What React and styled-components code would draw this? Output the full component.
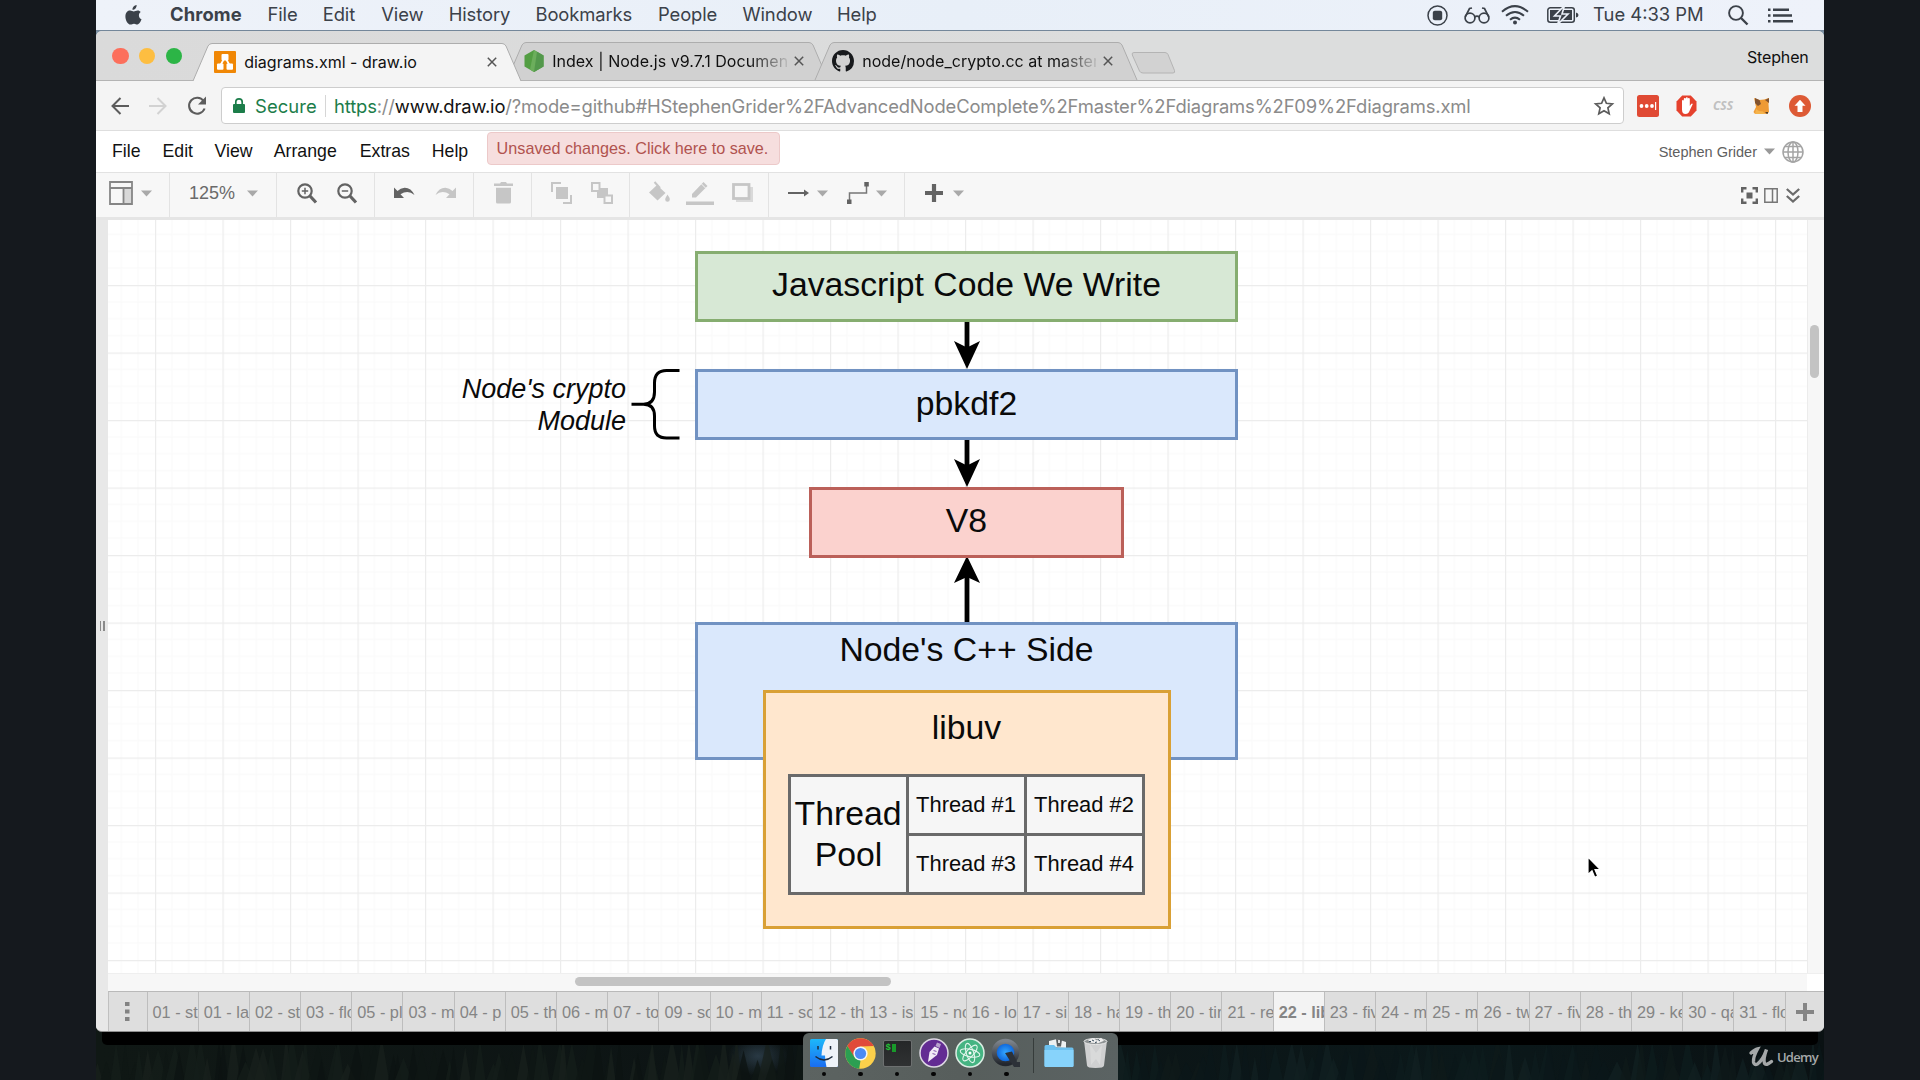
import React from "react";
import styled, { createGlobalStyle, css } from "styled-components";

const SANS = `"Liberation Sans", Arial, Helvetica, sans-serif`;
const SYSTEM = `Inter, Roboto, "Liberation Sans", sans-serif`;

const GlobalStyle = createGlobalStyle`
  * { box-sizing: border-box; }
  body { margin: 0; background: #15191e; overflow: hidden; }
`;

/* ---------- desktop ---------- */

const Screen = styled.div`
  width: 1920px;
  height: 1080px;
  padding: 0 96px;
  background: #15191e;
  font-family: ${SANS};
`;

const Desktop = styled.div`
  position: relative;
  display: flex;
  flex-direction: column;
  width: 1728px;
  height: 1080px;
  overflow: hidden;
  background: linear-gradient(#8aa0b2 0, #6d8294 60px, #0a0f10 900px);
`;

const Wallpaper = styled.svg`
  position: absolute;
  left: 0;
  bottom: 0;
  width: 1728px;
  height: 60px;
`;

const Row = styled.div`
  display: flex;
  align-items: center;
`;

const Slot = styled.div`
  display: flex;
  align-items: center;
  flex: none;
  margin-left: ${(p) => p.$gap || 0}px;
  ${(p) => p.$w && css`width: ${p.$w}px;`}
  ${(p) => p.$drop && css`padding-top: ${p.$drop}px;`}
`;

const Glyph = styled.svg`
  display: block;
  flex: none;
  overflow: visible;
`;

/* ---------- mac menu bar ---------- */

const MacBar = styled(Row)`
  position: relative;
  flex: none;
  height: 31px;
  padding: 0 31px 0 29px;
  background: linear-gradient(90deg, #eef2f9, #e8eff8 50%, #eef2fa);
  border-bottom: 1px solid #74879a;
  color: #3b4149;
  font: 18.4px/29px ${SYSTEM};
`;

const MacItem = styled.span`
  flex: none;
  width: ${(p) => p.$w}px;
  margin-left: ${(p) => p.$gap || 0}px;
  padding-bottom: 1px;
  white-space: nowrap;
  font-weight: ${(p) => (p.$bold ? 700 : 400)};
  letter-spacing: ${(p) => p.$track || 0}px;
`;

const Push = styled.div`
  flex: 1;
`;

/* ---------- browser window ---------- */

const Window = styled.div`
  position: relative;
  display: flex;
  flex-direction: column;
  flex: none;
  height: 1001px;
  border-radius: 6px;
  overflow: hidden;
  background: #e8e8e8;
  border-bottom: 1px solid #8e8e8e;
`;

const WindowShadow = styled.div`
  position: relative;
  flex: none;
  height: 13px;
  margin: 0 6px;
  background: #000;
  border-radius: 0 0 5px 5px;
`;

const TabStrip = styled(Row)`
  position: relative;
  flex: none;
  height: 50px;
  align-items: flex-end;
  background: linear-gradient(90deg, #dadada, #dcdddd 60%, #dcdddd);
  border-bottom: 1px solid #b4b4b4;
  color: #101010;
  font: 16px/20px ${SYSTEM};
`;

const Lights = styled(Row)`
  gap: 10.2px;
  padding: 0 12px 0 16px;
  height: 48px;
`;

const Light = styled.i`
  width: 16.6px;
  height: 16.6px;
  border-radius: 50%;
  background: ${(p) => p.$c};
`;

const Tab = styled.div`
  position: relative;
  display: flex;
  align-items: center;
  flex: none;
  width: ${(p) => p.$w}px;
  height: 38px;
  margin-left: ${(p) => p.$pull || 0}px;
  margin-bottom: ${(p) => (p.$active ? "-1px" : 0)};
  padding: 0 24px 0 ${(p) => p.$pad}px;
  z-index: ${(p) => (p.$active ? 3 : 1)};
`;

const TabShape = styled.svg`
  position: absolute;
  left: 0;
  top: 0;
  z-index: -1;
  overflow: visible;
`;

const TabTitle = styled.span`
  flex: 1;
  margin-left: 8px;
  overflow: hidden;
  white-space: nowrap;
  letter-spacing: ${(p) => p.$track || 0}px;
  ${(p) => p.$fade && css`mask-image: linear-gradient(90deg, #000 84%, rgba(0,0,0,0.12));`}
`;

const Profile = styled.span`
  align-self: center;
  width: 62px;
  margin-right: 15px;
  padding-top: 3px;
  white-space: nowrap;
  letter-spacing: -0.15px;
`;

const AddressRow = styled(Row)`
  flex: none;
  height: 50px;
  padding-left: 15px;
  background: #f4f4f4;
  border-bottom: 1px solid #dedede;
`;

const Omnibox = styled(Row)`
  flex: none;
  width: 1403px;
  height: 37px;
  margin-left: 14px;
  padding-left: 11px;
  background: #fff;
  border: 1px solid #cdcdcd;
  border-radius: 4px;
  font: 18.4px/30px ${SYSTEM};
  white-space: nowrap;
`;

const Secure = styled.span`
  width: 62px;
  margin-left: 10px;
  color: #1c7d4a;
  letter-spacing: 0.1px;
`;

const Rule = styled.i`
  width: 1px;
  height: 22px;
  margin: 0 8px;
  background: #d6d6d6;
`;

const Url = styled.span`
  flex: 1;
  color: #8b8b8b;
  letter-spacing: ${(p) => p.$track}px;
  em { font-style: normal; color: #1c7d4a; }
  b { font-weight: 400; color: #111; }
`;

const CssBadge = styled.span`
  width: 24px;
  margin-left: 16px;
  color: #c0c0c0;
  font: italic bold 12px/20px "Noto Sans", sans-serif;
`;

/* ---------- draw.io chrome ---------- */

const AppMenu = styled(Row)`
  flex: none;
  height: 42px;
  padding-left: 16px;
  background: #fff;
  border-bottom: 1px solid #e2e2e2;
  color: #111;
  font-size: 17.7px;
  line-height: 38px;
`;

const AppMenuItem = styled.span`
  flex: none;
  width: ${(p) => p.$w}px;
  padding-bottom: 2px;
  white-space: nowrap;
`;

const SaveNotice = styled.div`
  flex: none;
  align-self: flex-start;
  width: 293px;
  height: 33px;
  margin-top: 1px;
  padding-right: 2px;
  border: 1px solid #ecc9c9;
  border-radius: 4px;
  background: #f6dede;
  color: #b1534f;
  font-size: 16.2px;
  line-height: 31px;
  text-align: center;
  white-space: nowrap;
`;

const Account = styled(Row)`
  margin-left: auto;
  padding-right: 20px;
  gap: 7px;
  color: #606060;
  font-size: 14.5px;
`;

const Toolbar = styled(Row)`
  flex: none;
  height: 47px;
  background: #f7f7f7;
  border-bottom: 3px solid #e5e5e5;
  color: #6a6a6a;
  font-size: 18px;
`;

const ToolGroup = styled(Row)`
  flex: none;
  width: ${(p) => p.$w}px;
  height: 44px;
  padding-bottom: 4px;
  border-right: ${(p) => (p.$last ? "none" : "1px solid #e3e3e3")};
`;

const Editor = styled.div`
  display: flex;
  flex: none;
  height: 811px;
`;

const Splitter = styled.div`
  display: flex;
  justify-content: center;
  flex: none;
  width: 12px;
  height: 811px;
  padding-top: 401px;
  gap: 2px;
  background: #e8e8e8;
`;

const Grip = styled.i`
  width: 1.5px;
  height: 10px;
  background: #8a8a8a;
`;

const Main = styled.div`
  display: flex;
  flex-direction: column;
  width: 1716px;
`;

const CanvasRow = styled.div`
  display: flex;
  flex: none;
  height: 753px;
`;

const Canvas = styled.div`
  position: relative;
  flex: none;
  width: 1699px;
  height: 753px;
  overflow: hidden;
  background-color: #fff;
`;

const Layer = styled.svg`
  position: absolute;
  left: 0;
  top: 0;
`;

const VScroll = styled.div`
  flex: 1;
  padding: 105px 0 0 2px;
  background: #f7f7f7;
  border-left: 1px solid #ececec;
`;

const VThumb = styled.div`
  width: 9px;
  height: 53px;
  border-radius: 5px;
  background: #c3c3c3;
`;

const HScroll = styled.div`
  flex: none;
  height: 18px;
  padding: 3px 0 0 467px;
  background: linear-gradient(90deg, #f7f7f7 1699px, #fff 1699px);
  border-top: 1px solid #efefef;
`;

const HThumb = styled.div`
  width: 316px;
  height: 8.5px;
  border-radius: 5px;
  background: #c3c3c3;
`;

const PageTabs = styled.div`
  display: flex;
  flex: none;
  height: 40px;
  border-top: 1px solid #b9b9b9;
  border-left: 1px solid #c0c0c0;
  background: #dedede;
`;

const PageCell = styled.div`
  flex: none;
  width: ${(p) => p.$w || 51.19}px;
  height: 39px;
  border-right: 1px solid #bdbdbd;
  display: flex;
  align-items: center;
  justify-content: center;
`;

const PageTab = styled(PageCell)`
  justify-content: flex-start;
  padding-left: 5px;
  overflow: hidden;
  white-space: nowrap;
  color: #858585;
  font-size: 16.3px;
  background: ${(p) => (p.$active ? "#f3f3f3" : "transparent")};
  font-weight: ${(p) => (p.$active ? 700 : 400)};
  padding-top: 2px;
`;

/* ---------- diagram ---------- */

const palettes = {
  green: ["#d7e8d5", "#86ad70"],
  blue: ["#dae8fc", "#7192c2"],
  red: ["#fbd2ce", "#bb6059"],
  orange: ["#ffe7ce", "#d9a035"],
};

const Node = styled.div`
  position: absolute;
  left: ${(p) => p.$x}px;
  top: ${(p) => p.$y}px;
  width: ${(p) => p.$w}px;
  height: ${(p) => p.$h}px;
  padding-top: ${(p) => p.$top}px;
  background: ${(p) => palettes[p.$tone][0]};
  border: 3px solid ${(p) => palettes[p.$tone][1]};
  color: #0a0a0a;
  font-size: 33.75px;
  line-height: 40px;
  text-align: center;
  white-space: nowrap;
`;

const Note = styled.div`
  position: absolute;
  left: 318px;
  top: 153px;
  width: 200px;
  color: #0a0a0a;
  font-size: 27px;
  font-style: italic;
  line-height: 32.4px;
  text-align: right;
`;

const ThreadTable = styled.div`
  position: absolute;
  left: 680px;
  top: 554px;
  display: grid;
  grid-template-columns: 115px 115px 115px;
  grid-template-rows: 56px 56px;
  gap: 3px;
  padding: 3px;
  width: 357px;
  height: 121px;
  background: #6a6a6a;
  color: #0a0a0a;
`;

const PoolCell = styled.div`
  grid-row: 1 / 3;
  padding-top: 16px;
  background: #f6f6f6;
  font-size: 33.75px;
  line-height: 40.5px;
  text-align: center;
  text-indent: -1px;
`;

const ThreadCell = styled.div`
  display: flex;
  align-items: center;
  justify-content: center;
  padding-right: 1px;
  background: #f6f6f6;
  font-size: 21.9px;
  white-space: nowrap;
`;

const Pointer = styled.svg`
  position: absolute;
  left: 1491px;
  top: 856px;
`;

/* ---------- dock ---------- */

const Dock = styled.div`
  position: absolute;
  left: 707px;
  top: 1033px;
  display: flex;
  width: 315px;
  height: 47px;
  padding: 4px 0 0 3px;
  border-radius: 6px 6px 0 0;
  background: linear-gradient(90deg, #5c6361, #575e5c 50%, #5b6363);
`;

const DockItem = styled.div`
  display: flex;
  flex-direction: column;
  align-items: center;
  flex: none;
  width: ${(p) => p.$w || 36.45}px;
`;

const RunningDot = styled.i`
  width: 4.4px;
  height: 4.4px;
  margin-top: 3px;
  border-radius: 50%;
  background: #050505;
`;

const DockRule = styled.i`
  width: 1px;
  height: 35px;
  margin: 1px 7px 0 8.5px;
  background: #363c3b;
`;

const Brand = styled(Row)`
  position: absolute;
  right: 6px;
  top: 1046px;
  gap: 4px;
  color: #a5a8a9;
  font: 600 13px/22px "Open Sans", sans-serif;
  letter-spacing: -0.7px;
`;

/* ---------- icons ---------- */

const Caret = ({ gap = 8 }) => (
  <Slot $gap={gap}>
    <Glyph width="11" height="7"><path d="M0 .5h11L5.5 6.5z" fill="#a9a9a9" /></Glyph>
  </Slot>
);

const Ico = ({ w = 22, h = 24, gap = 0, children, ...rest }) => (
  <Slot $gap={gap}>
    <Glyph width={w} height={h} viewBox={`0 0 ${w} ${h}`} fill="none" {...rest}>{children}</Glyph>
  </Slot>
);

const Apple = () => (
  <Glyph width="17" height="21" viewBox="0 0 17 21" fill="#3b4149">
    <path d="M11.6 0c.2 1.300-.4 2.500-1.100 3.400-.8.900-1.900 1.500-3 1.400-.2-1.200.4-2.500 1.100-3.300C9.300.7 10.600.1 11.600 0zM15.700 7.100c-.9.6-1.800 1.700-1.800 3.400 0 2 1.300 3.300 2.600 3.800-.6 1.800-2.200 5-4.100 5.200-1.200.1-1.700-.8-3.400-.8-1.600 0-2.200.8-3.400.8C2.800 19.600.4 15.100.4 11.400c0-3.900 2.400-5.900 4.700-5.900 1.500 0 2.700 1 3.700 1 .9 0 2.300-1 4-1 1 0 2.300.5 2.900 1.600z" />
  </Glyph>
);

const Close = () => (
  <Glyph width="10" height="10" viewBox="0 0 10 10"><path d="M.8.8l8.400 8.400M9.200.8L.8 9.200" stroke="#555" strokeWidth="1.500" /></Glyph>
);

const DrawioIcon = () => (
  <Glyph width="22" height="22" viewBox="0 0 22 22">
    <rect width="22" height="22" rx="1" fill="#f08705" />
    <path d="M11 6l-5 9M11 6l5 9" stroke="#fff" strokeWidth="1.800" />
    <rect x="7.500" y="3" width="7" height="6.500" rx="1" fill="#fff" />
    <rect x="3" y="12.500" width="6.500" height="6.300" rx="1" fill="#fff" />
    <rect x="12.500" y="12.500" width="6.500" height="6.300" rx="1" fill="#fff" />
  </Glyph>
);

const NodeIcon = () => (
  <Glyph width="20" height="22" viewBox="0 0 20 22">
    <path d="M10 0l9.500 5.500v11L10 22 .5 16.500v-11z" fill="#539e43" />
    <path d="M10 0l9.500 5.500v11L10 22 6 19.500z" fill="#6cae5c" />
    <path d="M13 1.800l6.500 3.700v11L10 22z" fill="#3f873f" opacity=".55" />
  </Glyph>
);

const GithubIcon = () => (
  <Glyph width="22" height="22" viewBox="0 0 16 16" fill="#17191c">
    <path d="M8 0C3.580 0 0 3.580 0 8c0 3.540 2.290 6.530 5.470 7.590.4.070.55-.17.55-.38 0-.19-.01-.82-.01-1.490-2.010.37-2.530-.49-2.690-.94-.09-.23-.48-.94-.82-1.130-.28-.15-.68-.52-.01-.53.63-.01 1.080.58 1.230.82.72 1.210 1.870.87 2.330.66.070-.52.28-.87.51-1.070-1.780-.2-3.640-.89-3.640-3.950 0-.87.31-1.590.82-2.150-.08-.2-.36-1.020.08-2.120 0 0 .67-.21 2.200.82.64-.18 1.320-.27 2-.27s1.360.09 2 .27c1.530-1.040 2.200-.82 2.200-.82.44 1.100.16 1.920.08 2.120.51.56.82 1.270.82 2.150 0 3.070-1.870 3.750-3.650 3.950.29.25.54.73.54 1.480 0 1.070-.01 1.930-.01 2.200 0 .21.15.46.55.38A8.010 8.010 0 0016 8c0-4.420-3.580-8-8-8z" />
  </Glyph>
);

/* ---------- sections ---------- */

const macMenus = [
  ["File", 29.7, 25.500], ["Edit", 33, 25.500], ["View", 42, 25.500], ["History", 62, 25.500],
  ["Bookmarks", 97, 24.800], ["People", 60, 25.500], ["Window", 70, 24.500], ["Help", 40, 24.500],
];

const MenuBar = () => (
  <MacBar>
    <Apple />
    <MacItem $w={72} $gap={28} $bold $track={0.1}>Chrome</MacItem>
    {macMenus.map(([t, w, g]) => <MacItem key={t} $w={w} $gap={g} $track={-0.1}>{t}</MacItem>)}
    <Push />
    <Ico w={21} h={21}>
      <circle cx="10.500" cy="10.500" r="9.500" stroke="#3b4149" strokeWidth="1.500" />
      <rect x="5.800" y="5.800" width="9.400" height="9.400" rx="2" fill="#3b4149" />
    </Ico>
    <Ico w={26} h={17} gap={16} stroke="#3b4149" strokeWidth="1.700">
      <circle cx="6" cy="11" r="4.900" /><circle cx="20" cy="11" r="4.900" />
      <path d="M10.700 10q2.300-1.800 4.600 0M1.200 10L5.500 1.500 8 1M24.800 10L20.500 1.500 18 1" />
    </Ico>
    <Ico w={28} h={20} gap={11} stroke="#3b4149" strokeWidth="2">
      <path d="M1 6.800Q14-4.500 27 6.800M5 10.800q9-7.600 18 0M9 14.700q5-4.200 10 0" />
      <circle cx="14" cy="17.600" r="2" fill="#3b4149" stroke="none" />
    </Ico>
    <Ico w={32} h={18} gap={18}>
      <rect x=".8" y="1.800" width="26.500" height="14.400" rx="2.500" stroke="#3b4149" strokeWidth="1.500" />
      <rect x="3" y="4" width="22" height="10" fill="#3b4149" />
      <path d="M29 6.500q2.500.5 2.500 2.500T29 11.500z" fill="#3b4149" />
      <path d="M17.500-.5L7.500 10h6L10.500 18.500 21 8h-6z" fill="#3b4149" stroke="#ecf1f9" strokeWidth="1.600" />
    </Ico>
    <MacItem $w={110} $gap={14} $track={0}>Tue 4:33 PM</MacItem>
    <Ico w={21} h={20} gap={25} stroke="#3b4149" strokeWidth="1.900">
      <circle cx="8" cy="8" r="6.900" /><path d="M13 13l6.500 6.500" strokeWidth="2.400" />
    </Ico>
    <Ico w={25} h={15} gap={19} fill="#3b4149">
      <path d="M0 .5h2.500V3H0zM5 .5h16V3H5zM0 6.300h2.500v2.500H0zM5 6.300h19v2.500H5zM0 12h2.500v2.500H0zM5 12h20v2.500H5z" />
    </Ico>
  </MacBar>
);

const tabOutline = (w) => `M0 38 L15 3 Q16.500 0.500 19 0.500 H${w - 19} Q${w - 16.500} 0.500 ${w - 15} 3 L${w} 38`;

const BrowserTab = ({ w, pull, active, pad, icon, title, track, fade }) => (
  <Tab $w={w} $pull={pull} $active={active} $pad={pad}>
    <TabShape width={w} height="38">
      <path d={tabOutline(w)} fill={active ? "#f4f4f4" : "#d1d1d1"} stroke="#adadad" />
    </TabShape>
    {icon}
    <TabTitle $track={track} $fade={fade}>{title}</TabTitle>
    <Slot $gap={7}><Close /></Slot>
  </Tab>
);

const Tabs = () => (
  <TabStrip>
    <Lights><Light $c="#fc6f5c" /><Light $c="#fdbe41" /><Light $c="#2cb546" /></Lights>
    <BrowserTab w={328} pull={-1} active pad={21} icon={<DrawioIcon />} title="diagrams.xml - draw.io" track={0.02} />
    <BrowserTab w={321} pull={-14} pad={17} icon={<NodeIcon />} title="Index | Node.js v9.7.1 Documen" track={0.05} fade />
    <BrowserTab w={322} pull={-13} pad={17} icon={<GithubIcon />} title="node/node_crypto.cc at master" track={0.02} fade />
    <Slot $gap={-6}>
      <Glyph width="45" height="28" viewBox="0 0 45 28">
        <path d="M3 .5h31q2 0 3 2l6.500 16q.8 2.500-1.500 2.500H12q-2.500 0-3.500-2L1.300 3Q.5.5 3 .5z" fill="#d2d2d2" stroke="#b4b4b4" />
      </Glyph>
    </Slot>
    <Push />
    <Profile>Stephen</Profile>
  </TabStrip>
);

const Address = () => (
  <AddressRow>
    <Ico w={18} h={18} stroke="#5c5c5c" strokeWidth="2"><path d="M18 9H1.500M9.500 1L1.500 9l8 8" /></Ico>
    <Ico w={18} h={18} gap={20} stroke="#d2d2d2" strokeWidth="2"><path d="M0 9h16.500M8.500 1l8 8-8 8" /></Ico>
    <Ico w={20} h={20} gap={20} stroke="#5c5c5c" strokeWidth="2.100">
      <path d="M16.600 5A8 8 0 1 0 17.600 12.500" /><path d="M19 .5V8.500H11z" fill="#5c5c5c" stroke="none" />
    </Ico>
    <Omnibox>
      <Glyph width="12" height="15" viewBox="0 0 12 15">
        <rect y="6" width="12" height="9" rx="1" fill="#1c7d4a" />
        <path d="M2.800 7V4a3.200 3.200 0 0 1 6.400 0v3" fill="none" stroke="#1c7d4a" strokeWidth="1.700" />
      </Glyph>
      <Secure>Secure</Secure>
      <Rule />
      <Url $track={-0.145}>
        <em>https</em>://<b>www.draw.io</b>/?mode=github#HStephenGrider%2FAdvancedNodeComplete%2Fmaster%2Fdiagrams%2F09%2Fdiagrams.xml
      </Url>
      <Glyph width="20" height="20" viewBox="0 0 20 20">
        <path d="M10 1.800l2.400 5.500 6 .6-4.500 4 1.300 5.900L10 14.700l-5.200 3.100 1.300-5.900-4.500-4 6-.6z" fill="none" stroke="#5c5c5c" strokeWidth="1.700" />
      </Glyph>
      <Slot $w={9} />
    </Omnibox>
    <Ico w={22} h={22} gap={13}>
      <rect width="22" height="22" rx="2.500" fill="#e04a34" />
      <g fill="#fff"><circle cx="4.500" cy="11" r="1.900" /><circle cx="9.700" cy="11" r="1.900" /><circle cx="15" cy="11" r="1.900" /><rect x="18" y="7" width="1.200" height="8" /></g>
    </Ico>
    <Ico w={21} h={22} gap={17}>
      <path d="M6.200.5h8.600L20.500 6.500v9l-5.700 6H6.200L.5 15.500v-9z" fill="#e5412d" />
      <path d="M6 11V6q0-1 .9-1t.9 1V4q0-1 1-1t1 1v-.8q0-1 1-1t1 1V4q0-1 1-1t1 1v7l1.300-2q1-1 1.700 0L13.500 16q-1 3-4 3-3.500 0-3.500-4.500z" fill="#fff" />
    </Ico>
    <CssBadge>CSS</CssBadge>
    <Ico w={17} h={18} gap={16}>
      <path d="M1 1l5 2 5-.5L16 1l-.5 6L16 15l-2 2-6-.5-6 .5-1.500-2L3 10z" fill="#ee9a35" />
      <path d="M2 1l4.500 2L8 7 5 9 2 6zM12 3l4-2v5z" fill="#82532f" />
      <path d="M12 15.500l3-.5-.5 2z" fill="#222" /><path d="M3 12l3 2 4 .5 2 2.500H2z" fill="#f5b44c" />
    </Ico>
    <Ico w={22} h={22} gap={18.500}>
      <circle cx="11" cy="11" r="11" fill="#dd5a35" />
      <path d="M11 4.800l5.500 6h-3V17h-5v-6.200h-3z" fill="#fff" />
    </Ico>
  </AddressRow>
);

const appMenus = [["File", 50.500], ["Edit", 52], ["View", 59.300], ["Arrange", 86], ["Extras", 72], ["Help", 55.200]];

const Menus = () => (
  <AppMenu>
    {appMenus.map(([t, w]) => <AppMenuItem key={t} $w={w}>{t}</AppMenuItem>)}
    <SaveNotice>Unsaved changes. Click here to save.</SaveNotice>
    <Account>
      <span>Stephen Grider</span>
      <Glyph width="11" height="7"><path d="M0 .5h11L5.500 6.500z" fill="#999" /></Glyph>
      <Glyph width="22" height="22" viewBox="0 0 22 22" fill="none" stroke="#a4a4a4" strokeWidth="1.500">
        <circle cx="11" cy="11" r="10" /><ellipse cx="11" cy="11" rx="5" ry="10" />
        <path d="M11 1v20M1 11h20M3 5.500h16M3 16.500h16" />
      </Glyph>
    </Account>
  </AppMenu>
);

const DARK = "#636363";
const PALE = "#c6c6c6";

const Tools = () => (
  <Toolbar>
    <ToolGroup $w={74}>
      <Ico gap={13} w={24} h={24}>
        <rect x="15" y="7" width="8" height="16" fill="#d8d8d8" />
        <path d="M1 1h22v22H1zM1 7h22M14.500 7v16" stroke="#858585" strokeWidth="1.800" />
      </Ico>
      <Caret gap={8} />
    </ToolGroup>
    <ToolGroup $w={107}><Slot $gap={19} $w={48} $drop={1}>125%</Slot><Caret gap={10} /></ToolGroup>
    <ToolGroup $w={98}>
      <Ico gap={20} w={20} h={21} stroke={DARK} strokeWidth="2.200">
        <circle cx="8" cy="8" r="6.700" /><path d="M13 13l6 6.500" strokeWidth="3.200" /><path d="M8 4.800v6.400M4.800 8h6.400" strokeWidth="1.500" />
      </Ico>
      <Ico gap={20} w={20} h={21} stroke={DARK} strokeWidth="2.200">
        <circle cx="8" cy="8" r="6.700" /><path d="M13 13l6 6.500" strokeWidth="3.200" /><path d="M4.800 8h6.400" strokeWidth="1.500" />
      </Ico>
    </ToolGroup>
    <ToolGroup $w={99}>
      <Ico gap={19} w={21} h={14}>
        <path d="M0 1.500V12h10L6.500 8.300Q14 3.500 20.500 9 17 1.500 10.500 1.700 6.500 2 3.500 5z" fill={DARK} />
      </Ico>
      <Ico gap={20} w={21} h={14}>
        <path d="M21 1.500V12H11l3.500-3.700Q7 3.500.5 9 4 1.500 10.500 1.700q4 .3 7 3.300z" fill={PALE} />
      </Ico>
    </ToolGroup>
    <ToolGroup $w={58}>
      <Ico gap={20} w={19} h={22} fill={PALE}><path d="M0 1.500h6L7 0h5l1 1.500h6V4H0zM2 5.800h15V20q0 1.500-1.500 1.500h-12Q2 21.500 2 20z" /></Ico>
    </ToolGroup>
    <ToolGroup $w={98}>
      <Ico gap={19} w={21} h={22}>
        <rect x="5" y="5" width="12" height="12" fill={PALE} />
        <path d="M1 10V1h9M20 13v8h-8" stroke={PALE} strokeWidth="2" />
      </Ico>
      <Ico gap={19} w={22} h={22}>
        <rect x="6" y="6" width="11" height="10" fill={PALE} />
        <path d="M1 1h7.500v8H1zM13.500 13.500H21V21h-7.500z" fill="#f7f7f7" stroke={PALE} strokeWidth="2" />
      </Ico>
    </ToolGroup>
    <ToolGroup $w={139}>
      <Ico gap={18} w={22} h={22}>
        <path d="M1 10.500L9 3l8.500 8L9.500 18.500z" fill={PALE} /><path d="M6.500 0L12 6" stroke={PALE} strokeWidth="2" />
        <path d="M19.500 12.500q2.500 3.500 2.300 5a2.300 2.300 0 0 1-4.600 0q0-1.500 2.300-5z" fill={PALE} />
      </Ico>
      <Ico gap={16} w={28} h={26}>
        <path d="M6 14L17.500 2l4 4L10 17.500H6zM0 21.500h28V25H0z" fill={PALE} />
        <path d="M15.500 4l4 4" stroke="#f7f7f7" />
      </Ico>
      <Ico gap={18} w={21} h={20}>
        <rect x="4" y="4" width="17" height="15" fill="#d9d9d9" />
        <rect x="1.500" y="1.500" width="15.500" height="14" fill="#f7f7f7" stroke={PALE} strokeWidth="2.800" />
      </Ico>
    </ToolGroup>
    <ToolGroup $w={136}>
      <Ico gap={19} w={21} h={8}><path d="M0 4h17" stroke={DARK} strokeWidth="1.800" /><path d="M16 .5L21 4l-5 3.500z" fill={DARK} /></Ico>
      <Caret gap={8} />
      <Ico gap={19} w={22} h={22}>
        <path d="M2.500 20v-9h17V3" stroke="#777" strokeWidth="1.500" /><path d="M0 17.500h4.500V22H0zM17.300 0h4.500v4.500h-4.500z" fill={DARK} />
      </Ico>
      <Caret gap={7} />
    </ToolGroup>
    <ToolGroup $w={200} $last>
      <Ico gap={20} w={18} h={18}><path d="M9 0v18M0 9h18" stroke={DARK} strokeWidth="4.200" /></Ico>
      <Caret gap={10} />
    </ToolGroup>
    <Push />
    <Slot $drop={1}>
      <Ico w={17} h={17}>
        <path d="M1.200 5.500V1.200h4.300M11.500 1.200h4.300v4.300M15.800 11.500v4.300h-4.300M5.500 15.800H1.200v-4.300" stroke={DARK} strokeWidth="2.400" />
        <rect x="5.500" y="5.500" width="6" height="6" fill={DARK} />
      </Ico>
      <Ico gap={6} w={14} h={15}><path d="M.8.800h12.400v13.400H.8zM8.500.8v13.400" stroke="#777" strokeWidth="1.500" /></Ico>
      <Ico gap={8} w={14} h={15}><path d="M.8 1l6.200 5.500L13.200 1M.8 8l6.200 5.500L13.200 8" stroke="#6b6b6b" strokeWidth="2.300" /></Ico>
      <Slot $w={24} />
    </Slot>
  </Toolbar>
);

const Diagram = () => (
  <Canvas>
    <Layer width="1699" height="753">
      <defs>
        <pattern id="grid" x="47" y="65" width="67.500" height="67.500" patternUnits="userSpaceOnUse">
          <path d="M16.900 0v67.500M33.750 0v67.500M50.600 0v67.500M0 16.900h67.500M0 33.750h67.500M0 50.600h67.500" stroke="#fafafa" strokeWidth="1.200" />
          <path d="M.6 0v67.500M0 .6h67.500" stroke="#ececec" strokeWidth="1.200" />
        </pattern>
      </defs>
      <rect width="1699" height="753" fill="url(#grid)" />
      <g fill="none" stroke="#000" strokeWidth="4.800">
        <path d="M859 101v28M859 219v28M859 402v-48" />
      </g>
      <g fill="#000">
        <path d="M859 149l-13-28 13 6.500 13-6.500z" />
        <path d="M859 267l-13-28 13 6.500 13-6.500z" />
        <path d="M859 336l-13 27 13-6 13 6z" />
      </g>
      <path d="M572 150.500h-13Q547 150.500 547 163v9q0 12-11 12.200h-12H536Q547 184.200 547 196v10q0 12 12 12h13" transform="translate(-.5 0)" fill="none" stroke="#000" strokeWidth="3" />
    </Layer>
    <Note>Node's crypto Module</Note>
    <Node $tone="green" $x={587} $y={31} $w={543} $h={71} $top={10}>Javascript Code We Write</Node>
    <Node $tone="blue" $x={587} $y={149} $w={543} $h={71} $top={10.500}>pbkdf2</Node>
    <Node $tone="red" $x={701} $y={267} $w={315} $h={71} $top={10}>V8</Node>
    <Node $tone="blue" $x={587} $y={402} $w={543} $h={138} $top={4}>Node's C++ Side</Node>
    <Node $tone="orange" $x={654.500} $y={469.500} $w={408} $h={239.500} $top={14.500}>libuv</Node>
    <ThreadTable>
      <PoolCell>Thread Pool</PoolCell>
      <ThreadCell>Thread #1</ThreadCell>
      <ThreadCell>Thread #2</ThreadCell>
      <ThreadCell>Thread #3</ThreadCell>
      <ThreadCell>Thread #4</ThreadCell>
    </ThreadTable>
  </Canvas>
);

const pages = [
  "01 - st", "01 - la", "02 - st", "03 - flo", "05 - pl", "03 - m", "04 - p", "05 - th",
  "06 - m", "07 - to", "09 - so", "10 - m", "11 - sc", "12 - th", "13 - is", "15 - no", "16 - lo",
  "17 - si", "18 - ha", "19 - th", "20 - tin", "21 - re", "22 - lib", "23 - fiv", "24 - m", "25 - m",
  "26 - tw", "27 - fiv", "28 - th", "29 - ke", "30 - qa", "31 - flo",
];

const Pages = () => (
  <PageTabs>
    <PageCell $w={38.500}>
      <Glyph width="5" height="22" viewBox="0 0 5 22" fill="#828282"><path d="M0 1h4.500v4H0zM0 8.500h4.500v4H0zM0 16h4.500v4H0z" /></Glyph>
    </PageCell>
    {pages.map((t, i) => <PageTab key={i} $active={t.startsWith("22")}>{t}</PageTab>)}
    <PageCell $w={39}><Glyph width="18" height="18"><path d="M9 0v18M0 9h18" stroke="#858585" strokeWidth="4" /></Glyph></PageCell>
  </PageTabs>
);

const Finder = () => (
  <Glyph width="28" height="28" viewBox="0 0 28 28">
    <defs><linearGradient id="fb" x2="0" y2="1"><stop stopColor="#1db8fa" /><stop offset="1" stopColor="#1a6df0" /></linearGradient></defs>
    <rect width="28" height="28" rx="1.500" fill="url(#fb)" />
    <path d="M16 0h10.500q1.500 0 1.500 1.500v25q0 1.500-1.500 1.500H16.500Q15 22 15 16.500H11.500Q12 6 16 0z" fill="#eef3f8" />
    <path d="M8 7v3.500M20.500 7v3.500M5.500 17.500q8.500 7 17 0" stroke="#1c2a3c" strokeWidth="1.500" fill="none" />
  </Glyph>
);
const ChromeIcon = () => (
  <Glyph width="31" height="31" viewBox="0 0 48 48">
    <circle cx="24" cy="24" r="23.500" fill="#fcd04b" />
    <path d="M3.600 12.300A23.500 23.500 0 0 1 44.400 12.300L24 13 14 29.800z" fill="#e04a3a" />
    <path d="M3.600 12.300L14.500 29.500 24 35 22 47.500A23.500 23.500 0 0 1 3.600 12.300z" fill="#2c9f52" />
    <circle cx="24" cy="24" r="11" fill="#f3f6f8" /><circle cx="24" cy="24" r="8.700" fill="#4a8af4" />
  </Glyph>
);
const Prompt = styled.div`
  width: 29px;
  height: 27px;
  padding: 2px 0 0 2px;
  border: 1.5px solid #6d7070;
  border-radius: 2px;
  background: linear-gradient(#252728, #2f3132);
  color: #23c336;
  font: bold 9px/11px "Liberation Mono", monospace;
  display: flex;
  i { width: 4px; height: 8px; margin: 1px 0 0 1px; background: #189a2a; }
`;
const PenIcon = () => (
  <Glyph width="30" height="30" viewBox="0 0 30 30">
    <circle cx="15" cy="15" r="14" fill="#632c93" stroke="#dcd7e2" strokeWidth="1.500" />
    <path d="M9 24L10.500 14l5-5.500 4.500 2L18 17z" fill="#f1ebf6" /><path d="M16.500 8L18 4.500l4 1.500-1.500 4z" fill="#b8a2cc" />
    <path d="M13.500 15.500l3 1M14.500 12.500l3 1" stroke="#8b62b0" strokeWidth="1.200" />
  </Glyph>
);
const AtomIcon = () => (
  <Glyph width="30" height="30" viewBox="0 0 30 30" fill="none">
    <circle cx="15" cy="15" r="14" fill="#45b482" stroke="#dbeee4" strokeWidth="1.500" />
    <g stroke="#e2f5ec" strokeWidth="1.100"><ellipse cx="15" cy="15" rx="10" ry="3.700" transform="rotate(12 15 15)" /><ellipse cx="15" cy="15" rx="10" ry="3.700" transform="rotate(72 15 15)" /><ellipse cx="15" cy="15" rx="10" ry="3.700" transform="rotate(132 15 15)" /></g>
    <circle cx="15" cy="15" r="1.500" fill="#fff" />
  </Glyph>
);
const QuickTime = () => (
  <Glyph width="30" height="30" viewBox="0 0 30 30" fill="none">
    <defs><radialGradient id="qt"><stop stopColor="#35a8ff" /><stop offset="1" stopColor="#0a5fd8" /></radialGradient>
      <linearGradient id="qr" x2="0" y2="1"><stop stopColor="#7c838b" /><stop offset="1" stopColor="#23272e" /></linearGradient></defs>
    <circle cx="14.500" cy="14.500" r="10" fill="url(#qt)" />
    <circle cx="14.500" cy="14.500" r="11.300" stroke="url(#qr)" strokeWidth="5" />
    <path d="M14 15l7-1.500 5 10.500h3v5h-6z" fill="#2c3138" />
  </Glyph>
);
const FolderIcon = () => (
  <Glyph width="30" height="31" viewBox="0 0 30 31">
    <path d="M5 9V3l8-2 9 3v6z" fill="#eef0f0" /><path d="M12 1l6 .5-1 7h-4z" fill="#5b5f60" /><path d="M14 2h2v3h-2z" fill="#ddd" />
    <path d="M.5 8.500Q.5 7 2 7h8l2.500 2.500H28q1.500 0 1.500 1.500v16.500q0 1.500-1.500 1.500H2q-1.500 0-1.500-1.500z" fill="#6cc0ee" />
    <path d="M.5 12h29v15.500q0 1.500-1.500 1.500H2q-1.500 0-1.500-1.500z" fill="#87d3fb" />
  </Glyph>
);
const TrashIcon = () => (
  <Glyph width="25" height="32" viewBox="0 0 25 32">
    <path d="M1 3.500h23L21 28.500q0 2.500-8.500 2.500T4 28.500z" fill="#cfd0d1" />
    <path d="M7 7l1 21 5-6 4 6L19 8l-6 8z" fill="#dddede" opacity=".7" />
    <ellipse cx="12.500" cy="4.500" rx="11.500" ry="3" fill="#8d9293" stroke="#e4e5e5" />
    <path d="M5 3l5-2 4 2.500L18 .8l3 3-6 2.500-7-.5z" fill="#eee" /><path d="M9 3l2 1M15 2.500l2 1.500M6 4.500h2M12 5.500l2-.5" stroke="#3c5060" />
  </Glyph>
);

const dockApps = [Finder, ChromeIcon, () => <Prompt>$<i /></Prompt>, PenIcon, AtomIcon, QuickTime];

const DockFrame = styled.div`
  display: flex;
  align-items: center;
  justify-content: center;
  height: 32px;
`;

const AppDock = () => (
  <Dock>
    {dockApps.map((Icon, i) => <DockItem key={i}><DockFrame><Icon /></DockFrame><RunningDot /></DockItem>)}
    <DockRule />
    <DockItem $w={36}><DockFrame><FolderIcon /></DockFrame></DockItem>
    <DockItem $w={36}><DockFrame><TrashIcon /></DockFrame></DockItem>
  </Dock>
);

const trees = Array.from({ length: 210 }, (_, i) => {
  const r = (n) => Math.abs(Math.sin(i * 12.9898 + n * 78.233) * 43758.5453) % 1;
  const x = i * 8.300 + r(1) * 8;
  const top = 10 + r(2) * 34;
  const half = 4 + r(3) * 6;
  const tones = x > 1000 ? ["#0d1c1e", "#0b1719", "#112022", "#0f1a1a"] : ["#0f1714", "#141d19", "#0c1312", "#18201c"];
  return { d: `M${x} ${top}L${x + half} 62H${x - half}z`, fill: tones[Math.floor(r(4) * 4)] };
});

const Forest = () => (
  <Wallpaper viewBox="0 0 1728 60">
    <defs>
      <linearGradient id="night"><stop stopColor="#101815" /><stop offset=".45" stopColor="#0c1314" /><stop offset=".8" stopColor="#0b181a" /><stop offset="1" stopColor="#0a1113" /></linearGradient>
      <radialGradient id="mist"><stop stopColor="#3c5264" /><stop offset="1" stopColor="#3c5264" stopOpacity="0" /></radialGradient>
    </defs>
    <rect width="1728" height="60" fill="url(#night)" />
    <ellipse cx="662" cy="36" rx="30" ry="20" fill="url(#mist)" opacity=".6" />
    {trees.map((t) => <path key={t.d} d={t.d} fill={t.fill} opacity=".75" />)}
  </Wallpaper>
);

export default function App() {
  return (
    <Screen>
      <GlobalStyle />
      <Desktop>
        <Forest />
        <MenuBar />
        <Window>
          <Tabs />
          <Address />
          <Menus />
          <Tools />
          <Editor>
            <Splitter><Grip /><Grip /></Splitter>
            <Main>
              <CanvasRow><Diagram /><VScroll><VThumb /></VScroll></CanvasRow>
              <HScroll><HThumb /></HScroll>
              <Pages />
            </Main>
          </Editor>
        </Window>
        <WindowShadow />
        <Pointer width="14" height="24" viewBox="0 0 14 24">
          <path d="M1 1v17.500l4-3.800 2.700 6.500 3-1.200L8 13.700h5.300z" fill="#000" stroke="#fff" strokeWidth="1.200" />
        </Pointer>
        <AppDock />
        <Brand>
          <Glyph width="24" height="20" viewBox="0 0 24 20" fill="none" stroke="#a5a8a9" strokeWidth="3.400" strokeLinecap="round">
            <path d="M2 6q4-3.500 6.500-4Q4 10 4.500 15q.5 3.500 4 2Q14 13 17.500 2.500 14 12 15.500 16.500q1.500 2.500 7-2" />
          </Glyph>
          Udemy
        </Brand>
      </Desktop>
    </Screen>
  );
}
